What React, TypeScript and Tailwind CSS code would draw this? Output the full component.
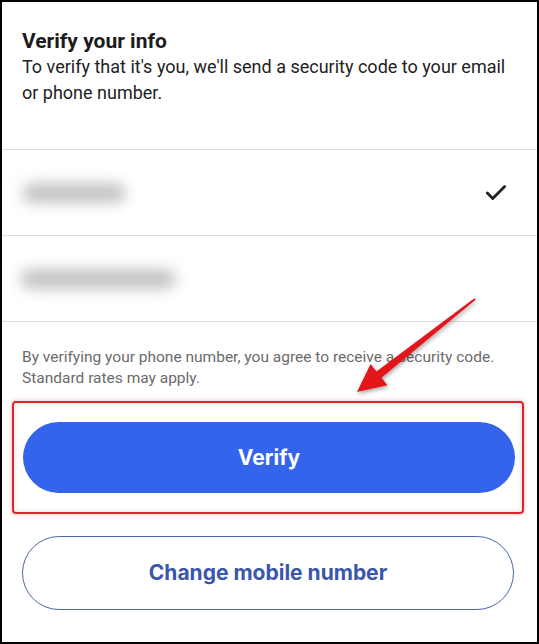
import { Check } from 'lucide-react';

export default function App() {
  return (
    <div className="relative w-[539px] h-[644px] overflow-hidden border-2 border-black bg-white font-['Roboto',sans-serif]">
      {/* Header */}
      <div className="h-[148px] border-b border-[#dcdcdc] px-5 pt-[26px]">
        <h1 className="text-[21px] leading-[26px] font-bold text-[#1c1c1c]">Verify your info</h1>
        <p className="text-[18px] leading-[26px] text-[#222]">
          To verify that it's you, we'll send a security code to your email or phone number.
        </p>
      </div>

      {/* Contact options (blurred) */}
      <div className="h-[86px] border-b border-[#dcdcdc] flex items-center justify-between pl-[20px] pr-[28px]">
        <div className="w-[104px] h-[20px] rounded-full bg-[#c4c4c4] blur-[7px]" />
        <Check size={26} strokeWidth={2.6} className="text-[#222]" />
      </div>
      <div className="h-[86px] border-b border-[#dcdcdc] flex items-center pl-[18px]">
        <div className="w-[156px] h-[20px] rounded-full bg-[#c4c4c4] blur-[7px]" />
      </div>

      {/* Disclaimer */}
      <div className="px-5 pt-[25px]">
        <p className="text-[15.5px] leading-[21px] text-[#6b6b6b]">
          By verifying your phone number, you agree to receive a security code. Standard rates may apply.
        </p>
      </div>

      {/* Highlighted verify button */}
      <div className="mx-[10px] mt-[12px] w-[512px] rounded-[4px] border-2 border-[#d8262b] shadow-[0_0_4px_rgba(216,38,43,0.35),inset_0_0_6px_rgba(0,0,0,0.12)] px-[9px] py-[19px]">
        <button className="w-[492px] h-[71px] rounded-full bg-[#3564ec] text-white text-[21px] font-bold font-['Inter',sans-serif]">
          Verify
        </button>
      </div>

      <div className="px-5 mt-[22px]">
        <button className="w-[492px] h-[74px] rounded-full border-[1.5px] border-[#4d68a6] text-[#3a56ad] text-[21px] font-bold font-['Inter',sans-serif]">
          Change mobile number
        </button>
      </div>

      {/* Red annotation arrow */}
      <svg className="absolute left-0 top-0 pointer-events-none" width="539" height="644">
        <defs>
          <filter id="sh" x="-20%" y="-20%" width="140%" height="140%">
            <feDropShadow dx="1" dy="2" stdDeviation="2" floodColor="#000" floodOpacity="0.35" />
          </filter>
        </defs>
        <polygon
          points="472.4,296.2 374.5,369.4 368.6,362 355,390 385.4,383.2 379.5,375.7 473.6,297.8"
          fill="#e3141b"
          filter="url(#sh)"
        />
      </svg>
    </div>
  );
}
